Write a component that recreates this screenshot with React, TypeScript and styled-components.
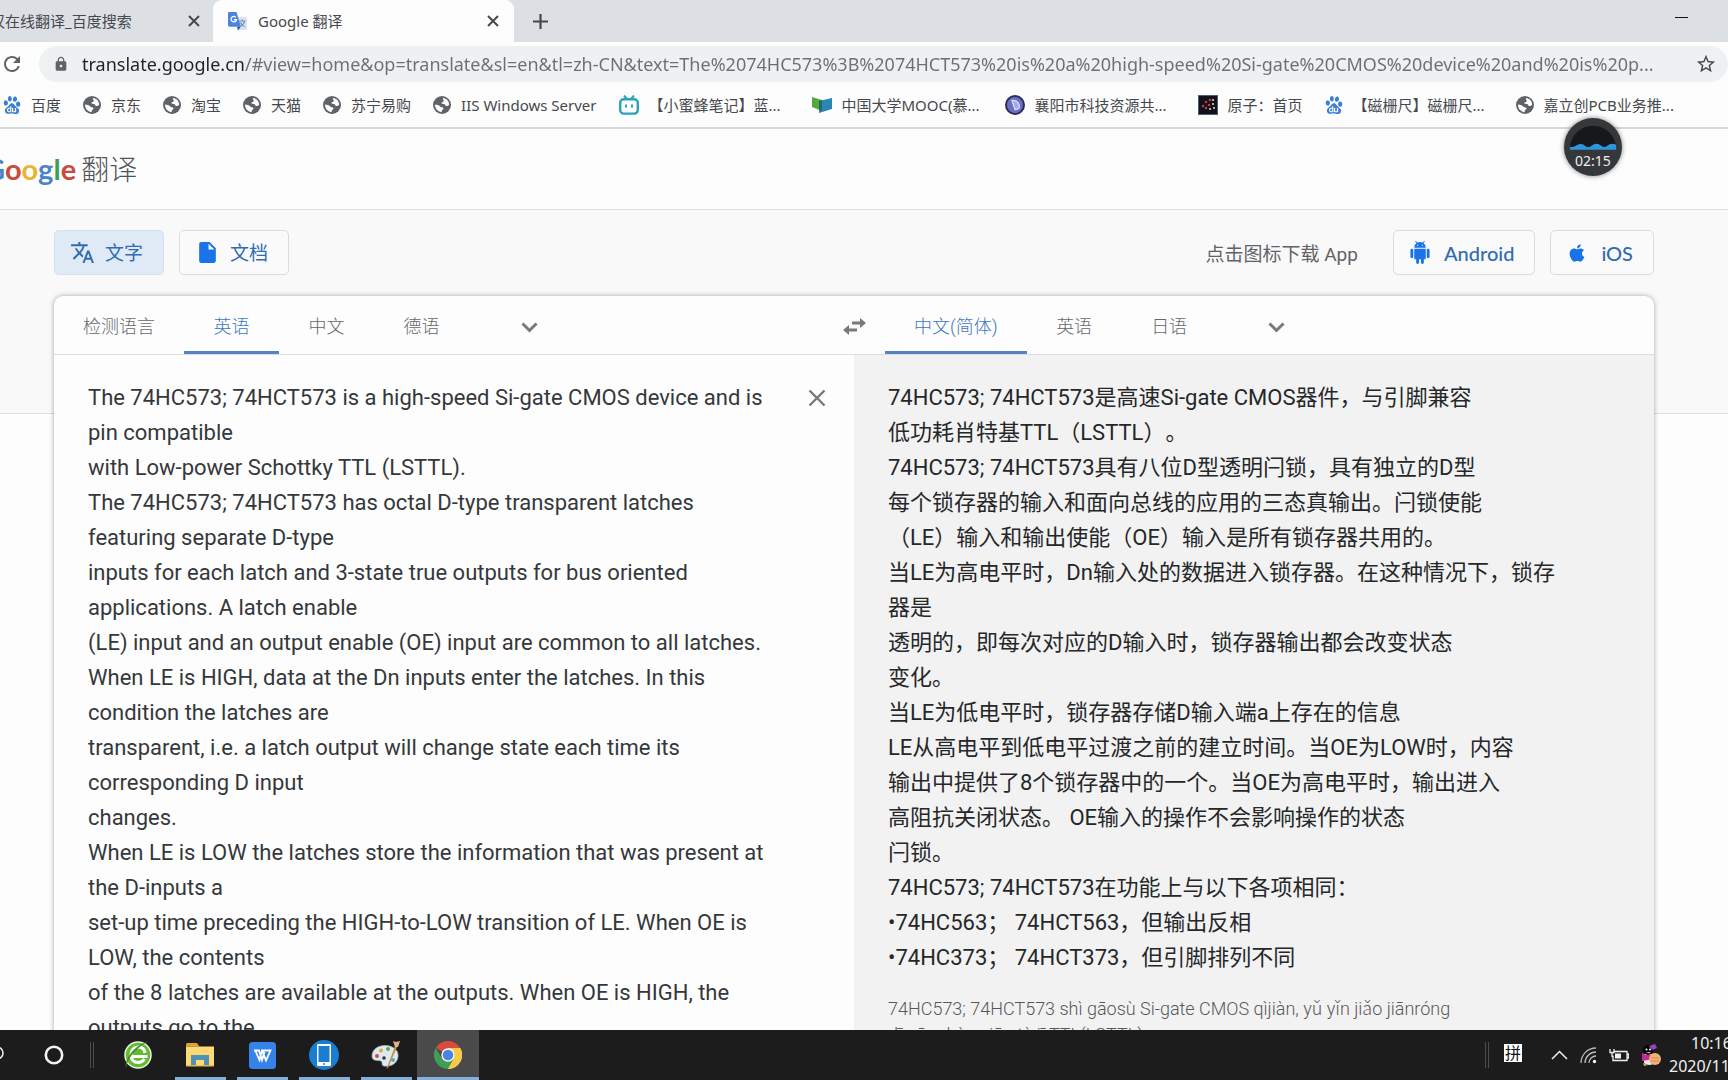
import React from "react";
import styled, { createGlobalStyle, css } from "styled-components";
import { MdTranslate, MdInsertDriveFile, MdLock, MdRefresh, MdStarBorder } from "react-icons/md";
import { FaApple } from "react-icons/fa";
import { SiBaidu } from "react-icons/si";

const ui = `"Noto Sans", "Noto Sans CJK SC", sans-serif`;
const web = `Roboto, "Noto Sans CJK SC", sans-serif`;
const brand = `Lato, "Noto Sans CJK SC", sans-serif`;

const Global = createGlobalStyle`
  *, *::before, *::after { box-sizing: border-box; }
  body { margin: 0; background: #fdfdfd; font-family: ${ui}; overflow: hidden; }
  button, input, textarea { font: inherit; color: inherit; border: 0; background: none; padding: 0; margin: 0; outline: 0; }
  a { color: inherit; text-decoration: none; }
  svg { display: block; flex: none; }
`;

const Desktop = styled.div`
  display: flex;
  flex-direction: column;
  height: 100vh;
  overflow: hidden;
`;

/* ---------- browser chrome ---------- */

const TabStrip = styled.div`
  display: flex;
  flex: none;
  height: 42px;
  background: #dce0e4;
  color: #45494d;
  font-size: 15px;
`;

const BackTab = styled.div`
  display: flex;
  align-items: center;
  justify-content: space-between;
  width: 213px;
  padding-right: 11px;
  overflow: hidden;
`;

const BackTitle = styled.span`
  margin: 0 0 2px -10px;
  white-space: nowrap;
`;

const FrontTab = styled.div`
  display: flex;
  align-items: center;
  gap: 11px;
  width: 301px;
  padding: 0 13px 0 15px;
  border-radius: 9px 9px 0 0;
  background: #fdfdfd;
`;

const FrontTitle = styled.span`
  flex: 1;
  padding-bottom: 2px;
  white-space: nowrap;
`;

const IconButton = styled.button<{ $w?: number }>`
  display: flex;
  align-items: center;
  justify-content: center;
  width: ${(p) => p.$w ?? 16}px;
  flex: none;
  color: #45494d;
`;

const Spacer = styled.div`
  flex: 1;
`;

const Minimize = styled(IconButton)`
  align-items: flex-start;
  padding-top: 17px;
  width: 94px;
  color: #111;
`;

const Toolbar = styled.div`
  display: flex;
  flex: none;
  align-items: center;
  height: 46px;
  padding-bottom: 2px;
  background: #fdfdfd;
`;

const ReloadButton = styled(IconButton)`
  width: 39px;
  padding-right: 16px;
  color: #5f6368;
`;

const Omnibox = styled.label`
  display: flex;
  flex: 1;
  align-items: center;
  height: 36px;
  padding: 0 10px 0 14px;
  border-radius: 18px;
  background: #eef1f2;
  color: #5f6368;
`;

const Address = styled.input`
  flex: 1;
  min-width: 0;
  height: 36px;
  margin-left: 13px;
  font-size: 18px;
  color: #6b6f73;
  background: linear-gradient(90deg, #202124 162px, #6b6f73 162px);
  background-clip: text;
  -webkit-background-clip: text;
  -webkit-text-fill-color: transparent;
`;

const Bookmarks = styled.nav`
  display: flex;
  flex: none;
  align-items: center;
  gap: 22px;
  height: 41px;
  padding: 0 0 5px 3px;
  border-bottom: 2px solid #d6d9dc;
  background: #fdfdfd;
  color: #45494d;
  font-size: 15px;
  white-space: nowrap;
`;

const Bookmark = styled.a<{ $long?: boolean }>`
  display: flex;
  align-items: center;
  flex: none;
  gap: 10px;
  line-height: 24px;
  span { ${(p) => p.$long && css`width: 141px;`} }
`;

/* ---------- web page ---------- */

const Page = styled.main`
  flex: 1;
  min-height: 0;
  overflow: hidden;
  font-family: ${web};
`;

const Masthead = styled.header`
  display: flex;
  align-items: center;
  height: 81px;
  padding-bottom: 2px;
  border-bottom: 1px solid #dcddde;
`;

const Logo = styled.a`
  display: flex;
  align-items: baseline;
  gap: 5px;
  margin-left: -16px;
  font-family: ${brand};
`;

const Wordmark = styled.span`
  font-size: 29px;
  font-weight: 700;
  line-height: 40px;
`;

const Letter = styled.span<{ $c: string }>`
  color: ${(p) => p.$c};
`;

const Product = styled.span`
  font-size: 28px;
  font-weight: 300;
  color: #505458;
`;

const Band = styled.div`
  height: 204px;
  padding: 20px 74px 0 54px;
  border-bottom: 1px solid #dcddde;
  background: #f9f9f9;
`;

const Modes = styled.div`
  display: flex;
  align-items: center;
  gap: 15px;
`;

const PillButton = styled.button<{ $active?: boolean }>`
  display: flex;
  align-items: center;
  gap: 10px;
  height: 45px;
  padding: 0 20px 0 15px;
  border: 1px solid ${(p) => (p.$active ? "#d3e1f3" : "#dadce0")};
  border-radius: 5px;
  background: ${(p) => (p.$active ? "#e0eaf6" : "#fafafa")};
  color: #2f6cb3;
  font-family: ${brand};
  font-size: 19px;
  line-height: 24px;
  white-space: nowrap;
`;

const StoreLink = styled(PillButton).attrs({ as: "a" })`
  gap: 14px;
  padding: 0 20px 0 16px;
  font-size: 20px;
  font-weight: 500;
`;

const StoreHint = styled.span`
  margin-right: 20px;
  font-size: 19px;
  color: #5f6368;
`;

const Card = styled.section`
  position: relative;
  margin: -118px 74px 0 54px;
  border-radius: 9px 9px 0 0;
  background: #fdfdfd;
  box-shadow: 0 0 5px rgba(0, 0, 0, 0.34);
`;

const LanguageRow = styled.div`
  display: grid;
  grid-template-columns: 1fr 62px 1fr;
  height: 59px;
  border-bottom: 1px solid #dcddde;
`;

const Languages = styled.div`
  display: flex;
`;

const Language = styled.button<{ $active?: boolean }>`
  min-width: 95px;
  padding: 7px 29px 0;
  border-bottom: 3px solid ${(p) => (p.$active ? "#5383c3" : "transparent")};
  color: ${(p) => (p.$active ? "#3f76bd" : "#66696c")};
  font-size: 18px;
  font-weight: 300;
  line-height: 24px;
  white-space: nowrap;
`;

const MoreButton = styled(IconButton)`
  width: 120px;
  padding-top: 5px;
  color: #77797c;
`;

const SwapButton = styled(IconButton)`
  width: 62px;
  padding-top: 3px;
  color: #77797c;
`;

const Panes = styled.div`
  display: grid;
  grid-template-columns: 1fr 1fr;
`;

const SourcePane = styled.div`
  display: flex;
  align-items: flex-start;
  padding: 25px 28px 0 34px;
`;

const SourceText = styled.textarea`
  flex: 1;
  min-width: 0;
  height: 700px;
  overflow: hidden;
  resize: none;
  white-space: pre;
  font-size: 22px;
  line-height: 35px;
  color: #35383b;
`;

const ClearButton = styled(IconButton)`
  height: 35px;
  width: 18px;
  color: #77797c;
`;

const TargetPane = styled.div`
  min-height: 725px;
  padding: 25px 34px 0;
  background: #f2f2f2;
`;

const TargetText = styled.p`
  margin: 0;
  white-space: pre;
  text-spacing-trim: space-all;
  font-size: 22px;
  line-height: 35px;
  color: #252729;
`;

const Pinyin = styled.p`
  margin: 21px 0 0;
  white-space: pre;
  font-size: 18px;
  font-weight: 300;
  line-height: 26px;
  color: #56595c;
`;

/* ---------- floating recorder ---------- */

const Recorder = styled.div`
  position: absolute;
  top: 118px;
  right: 106px;
  width: 58px;
  height: 58px;
  border-radius: 50%;
  background: #35383b;
  box-shadow: 0 0 5px rgba(0, 0, 0, 0.5);
  overflow: hidden;
  display: flex;
  flex-direction: column;
  align-items: center;
  color: #eee;
  font-size: 14px;
  line-height: 20px;
`;

/* ---------- taskbar ---------- */

const Taskbar = styled.footer`
  position: relative;
  display: flex;
  flex: none;
  align-items: stretch;
  height: 50px;
  background: #1c1c1c;
  color: #f0f0f0;
`;

const TaskSlot = styled.button<{ $open?: boolean; $active?: boolean }>`
  display: flex;
  align-items: center;
  justify-content: center;
  width: 62px;
  background: ${(p) => (p.$active ? "#4a4a4a" : "transparent")};
  background-image: ${(p) => (p.$open ? "linear-gradient(#82b0d8, #82b0d8)" : "none")};
  background-size: ${(p) => (p.$active ? "100%" : "51px")} 3px;
  background-position: center bottom;
  background-repeat: no-repeat;
`;

const SearchSlot = styled.button`
  width: 23px;
`;

const Grip = styled.div<{ $before?: number; $after?: number }>`
  align-self: center;
  width: 4px;
  height: 26px;
  margin: 0 ${(p) => p.$after ?? 0}px 0 ${(p) => p.$before ?? 0}px;
  border: solid #4c4c4c;
  border-width: 0 1px;
`;

const Tray = styled.div`
  display: flex;
  align-items: center;
  gap: 12px;
`;

const ImeButton = styled.button`
  width: 18px;
  height: 18px;
  margin: 0 17px 4px 0;
  background: #fff;
  color: #111;
  font-size: 16px;
  line-height: 18px;
`;

const Clock = styled.div`
  width: 59px;
  margin-left: -4px;
  overflow: hidden;
  white-space: nowrap;
  font-size: 16px;
  line-height: 23px;
`;

const Time = styled.div`
  padding-left: 22px;
`;

/* ---------- drawings ---------- */

const Cross = ({ size, stroke }: { size: number; stroke: number }) => (
  <svg width={size} height={size} viewBox="0 0 12 12" stroke="currentColor" strokeWidth={stroke} fill="none">
    <path d="M1 1l10 10M11 1L1 11" />
  </svg>
);

const Chevron = () => (
  <svg width="17" height="11" viewBox="0 0 17 11" fill="none" stroke="currentColor" strokeWidth="3">
    <path d="M1.500 1.500l7 7 7-7" />
  </svg>
);

const Globe = () => (
  <svg width="18" height="18" viewBox="0 0 18 18">
    <circle cx="9" cy="9" r="9" fill="#5f6368" />
    <path d="M10 2c3.500.3 6 3 6.200 6.500-.8 1.200-2 1.800-3.200 1.400-1-.4-.8-1.600-2-1.900-1-.3-2.500.2-2.600-1 0-1 1.600-.9 2.200-1.600.6-.8-.9-1.500-.6-3.400z" fill="#fdfdfd" />
    <path d="M2 8.500c1.800.2 3.800.6 5.200 1.900 1 .9 2.600.6 3.200 1.700.5 1-.8 1.500-1.300 2.200-.4.600-.2 1.200-.7 1.900C4.600 15.500 1.900 12.500 2 8.500z" fill="#fdfdfd" />
  </svg>
);

const Paw = () => <SiBaidu size={18} color="#3b7fd4" />;

const TranslateLogo = () => (
  <svg width="19" height="19" viewBox="0 0 20 20">
    <path d="M8 5h10.500a1.500 1.500 0 0 1 1.500 1.500v11a1.500 1.500 0 0 1-1.500 1.500H12z" fill="#dfe3e8" />
    <path d="M11.500 9.500h7M15 8v1.500M17.500 9.500c-.5 2.500-2.500 4.500-4.500 5.500M13 11c1 2 2.500 3.500 4.500 4.500" stroke="#6c8fc7" strokeWidth="1.200" fill="none" />
    <path d="M1.500 0H9l4.500 15.500H1.500A1.500 1.500 0 0 1 0 14V1.500A1.500 1.500 0 0 1 1.500 0z" fill="#4a84dc" />
    <path d="M9.500 15.500h4l-3 4z" fill="#2c5aa8" />
    <path d="M8.300 5.600A2.900 2.900 0 1 0 9 8H6.300" stroke="#fff" strokeWidth="1.400" fill="none" />
  </svg>
);

const Bee = () => (
  <svg width="20" height="20" viewBox="0 0 20 20" fill="none" stroke="#2aa3bd" strokeWidth="2">
    <path d="M5 0.500l3 3.500M15 0.500l-3 3.500" />
    <rect x="1.200" y="4.200" width="17.600" height="14.400" rx="3.500" strokeWidth="2.400" />
    <path d="M7 9.500v3M13 9.500v3" />
  </svg>
);

const Mooc = () => (
  <svg width="20" height="18" viewBox="0 0 20 18">
    <path d="M0 1l10 3v11L0 11z" fill="#55a83c" />
    <path d="M7 5l13-3v11L7 17z" fill="#2b86b8" />
    <path d="M7 5l3-1v11l-3-1z" fill="#1d6c62" />
  </svg>
);

const Disc = () => (
  <svg width="20" height="20" viewBox="0 0 20 20">
    <circle cx="10" cy="10" r="9" fill="#6a70c4" stroke="#2b2d55" strokeWidth="2" />
    <path d="M7 5.500l3 9c4 0 5-2 4-5s-3.500-4.500-7-4z" fill="#a3a8e6" stroke="#d9dbf8" strokeWidth="1.300" />
  </svg>
);

const Atom = () => (
  <svg width="20" height="20" viewBox="0 0 20 20">
    <rect x="0.500" y="0.500" width="19" height="19" fill="#10121c" stroke="#4d5b7c" />
    <g fill="#c23b32">
      <circle cx="5" cy="11" r="1.300" /><circle cx="8" cy="7" r="1.300" /><circle cx="8" cy="13" r="1.300" />
      <circle cx="12" cy="5" r="1.300" /><circle cx="11" cy="10" r="1.300" />
    </g>
    <g fill="#f1d9c8">
      <circle cx="15" cy="5" r="1" /><circle cx="15" cy="9" r="1" /><circle cx="12" cy="14" r="1" /><circle cx="16" cy="13" r="1" />
    </g>
  </svg>
);

const Android = () => (
  <svg width="20" height="23" viewBox="2 0 20 24" fill="#1a73e8">
    <path d="M6 18c0 .55.45 1 1 1h1v3.500c0 .83.67 1.500 1.500 1.500s1.500-.67 1.500-1.500V19h2v3.500c0 .83.67 1.500 1.500 1.500s1.500-.67 1.500-1.500V19h1c.55 0 1-.45 1-1V8H6v10zM3.500 8C2.670 8 2 8.670 2 9.500v7c0 .83.67 1.500 1.500 1.500S5 17.330 5 16.500v-7C5 8.670 4.330 8 3.500 8zm17 0c-.83 0-1.500.67-1.500 1.500v7c0 .83.67 1.500 1.500 1.500s1.500-.67 1.500-1.500v-7c0-.83-.67-1.500-1.500-1.500zm-4.970-5.840l1.300-1.300c.2-.2.2-.51 0-.71-.2-.2-.51-.2-.71 0l-1.480 1.480C13.850 1.230 12.950 1 12 1c-.96 0-1.860.23-2.660.63L7.850.15c-.2-.2-.51-.2-.71 0-.2.2-.2.51 0 .71l1.310 1.310C6.970 3.260 6 5.010 6 7h12c0-1.990-.97-3.750-2.470-4.840zM10 5H9V4h1v1zm5 0h-1V4h1v1z" />
  </svg>
);

const Swap = () => (
  <svg width="23" height="17" viewBox="0 0 23 17" fill="currentColor">
    <path d="M9 3.500h8V0l6 5-6 5V6.500H9zM14 10.500H6V7L0 12l6 5v-3.500h8z" />
  </svg>
);

const Wave = () => (
  <svg width="58" height="33" viewBox="0 0 59 33">
    <path d="M6 31a23.500 23.500 0 0 1 47 0z" fill="#15191c" />
    <path d="M6 29q4 1 7-1.500 5-3 9 1 3 2 6-.5 5-4 10 0 3 2.500 6 0 4-3.500 9-1v5H6z" fill="#2e95dc" />
  </svg>
);

const Cortana = () => (
  <svg width="20" height="20" viewBox="0 0 20 20" fill="none" stroke="#f2f2f2" strokeWidth="2.600">
    <circle cx="10" cy="10" r="8.200" />
  </svg>
);

const Lens = () => (
  <svg width="8" height="18" viewBox="0 0 8 18" fill="none" stroke="#f2f2f2" strokeWidth="1.500">
    <circle cx="-3" cy="7" r="6" />
  </svg>
);

const GreenBrowser = () => (
  <svg width="30" height="30" viewBox="0 0 30 30">
    <circle cx="15" cy="15" r="13" fill="#62bb33" stroke="#e8f5dd" strokeWidth="1.500" />
    <path d="M8.500 16.500h16M22 13c-.5-4-3.500-6-7-6-4 0-7 3.500-7 8s3 7.500 7 7.500c3 0 5-1.200 6.500-3.500" fill="none" stroke="#fff" strokeWidth="3.200" />
    <path d="M3 28C1 20 12 3 27 1.500c-3 .5-6 2-9 4.500C10 12 4 20 3 28z" fill="#3e8f22" />
  </svg>
);

const Folder = () => (
  <svg width="28" height="24" viewBox="0 0 28 24">
    <path d="M0 1.500Q0 0 1.500 0H11l2.500 3.500H0z" fill="#e3a12f" />
    <path d="M0 3.500h28V22H0z" fill="#fbd975" />
    <path d="M5 12h18v11h-5v-6h-8v6H5z" fill="#4d92b5" />
    <path d="M0 22h28v1.500H0z" fill="#e7b653" />
    <path d="M10 17h8v5h-8z" fill="#fbd975" />
  </svg>
);

const Writer = () => (
  <svg width="27" height="27" viewBox="0 0 27 27">
    <rect width="27" height="27" rx="3.500" fill="#3583e8" />
    <path d="M5 8.500h5l3 9.500 2.500-8M13 9l-2.500 9L6.500 9M12 8.500h9.500L17 18.500l-3.500-9" fill="none" stroke="#fff" strokeWidth="1.800" />
  </svg>
);

const Phone = () => (
  <svg width="30" height="30" viewBox="0 0 30 30">
    <circle cx="15" cy="15" r="15" fill="#1a7ed0" />
    <rect x="8" y="4" width="14" height="22" rx="1" fill="#fff" />
    <rect x="9.500" y="6" width="11" height="16" fill="#1a7ed0" />
    <circle cx="15" cy="24" r="1" fill="#1a7ed0" />
  </svg>
);

const Palette = () => (
  <svg width="30" height="30" viewBox="0 0 30 30">
    <path d="M1 16C1 9 8 5 15 5.500S28 10 27 17s-8 10-14 9c-3-.5-1-4-3-5s-9 1-9-5z" fill="#dce9f0" stroke="#9db4c2" strokeWidth="0.700" />
    <circle cx="6" cy="16" r="2" fill="#d94a3e" />
    <circle cx="10" cy="10.500" r="2" fill="#e9a63a" />
    <circle cx="17" cy="9" r="2" fill="#5aa84d" />
    <circle cx="13" cy="18" r="1.800" fill="#243a4c" />
    <circle cx="22" cy="20" r="2" fill="#57a6d6" />
    <path d="M24 6l2 1-9 21-1.500 1z" fill="#cf8a3e" />
    <path d="M22 1l3 1 4-1-2 6h-3z" fill="#e7b283" />
  </svg>
);

const Chrome = () => (
  <svg width="28" height="28" viewBox="0 0 48 48">
    <path d="M24 24L3.200 12A24 24 0 0 1 44.800 12z" fill="#d94b3c" />
    <path d="M24 24V12h20.800A24 24 0 0 1 24 48z" fill="#f7cb46" />
    <path d="M24 48A24 24 0 0 1 3.200 12L13.600 30 34.400 30z" fill="#3f9d58" />
    <path d="M34.400 30L24 48a24 24 0 0 0 20.800-36H24z" fill="#f7cb46" />
    <circle cx="24" cy="24" r="11.500" fill="#f4f4f4" />
    <circle cx="24" cy="24" r="9" fill="#4a84e0" />
  </svg>
);

const CaretUp = () => (
  <svg width="17" height="10" viewBox="0 0 17 10" fill="none" stroke="#f0f0f0" strokeWidth="1.500">
    <path d="M1 9l7.500-7.500L16 9" />
  </svg>
);

const Wifi = () => (
  <svg width="17" height="17" viewBox="0 0 17 17" fill="none" stroke="#b9b9b9" strokeWidth="1.300">
    <path d="M1 16A15 15 0 0 1 16 1M5 16A11 11 0 0 1 16 5M9 16a7 7 0 0 1 7-7" />
    <circle cx="14.500" cy="14.500" r="1.700" fill="#f5f5f5" stroke="none" />
  </svg>
);

const Battery = () => (
  <svg width="20" height="15" viewBox="0 0 20 15" fill="none" stroke="#f0f0f0" strokeWidth="1.300">
    <path d="M5 3.500h13v9H4v-5M18.500 6h1v4h-1M1 1v3.500h4V1M3 4.500V9" />
    <path d="M6 5.500h6v5H6z" fill="#f0f0f0" stroke="none" />
  </svg>
);

const Penguin = () => (
  <svg width="20" height="22" viewBox="0 0 20 22">
    <path d="M3 10h10l1 9q-6 4-11 0z" fill="#f3e6ea" />
    <circle cx="7" cy="6" r="5" fill="#060608" />
    <path d="M1 9q6 4 12 0l1 5-7 2-6 1z" fill="#c22a95" />
    <path d="M8 2l6-2 2 4-5 2z" fill="#9a3fc0" />
    <circle cx="5.500" cy="5.500" r="1" fill="#fff" />
    <circle cx="9" cy="5.500" r="1" fill="#fff" />
    <path d="M5 8h5l-2 1.500z" fill="#f2a33a" />
    <circle cx="14" cy="15" r="6" fill="#f0b07a" />
    <path d="M10 14h8M10 17h8" stroke="#d98a4e" />
    <path d="M2 19l5 2-4 1z" fill="#e8a23c" />
  </svg>
);

/* ---------- content ---------- */

const bookmarks: { label: string; icon: React.ReactNode; long?: boolean }[] = [
  { label: "百度", icon: <Paw /> },
  { label: "京东", icon: <Globe /> },
  { label: "淘宝", icon: <Globe /> },
  { label: "天猫", icon: <Globe /> },
  { label: "苏宁易购", icon: <Globe /> },
  { label: "IIS Windows Server", icon: <Globe /> },
  { label: "【小蜜蜂笔记】蓝...", icon: <Bee />, long: true },
  { label: "中国大学MOOC(慕...", icon: <Mooc />, long: true },
  { label: "襄阳市科技资源共...", icon: <Disc />, long: true },
  { label: "原子：首页", icon: <Atom /> },
  { label: "【磁栅尺】磁栅尺...", icon: <Paw />, long: true },
  { label: "嘉立创PCB业务推...", icon: <Globe />, long: true },
];

const address =
  "translate.google.cn/#view=home&op=translate&sl=en&tl=zh-CN&text=The%2074HC573%3B%2074HCT573%20is%20a%20high-speed%20Si-gate%20CMOS%20device%20and%20is%20p...";

const source = `The 74HC573; 74HCT573 is a high-speed Si-gate CMOS device and is
pin compatible
with Low-power Schottky TTL (LSTTL).
The 74HC573; 74HCT573 has octal D-type transparent latches
featuring separate D-type
inputs for each latch and 3-state true outputs for bus oriented
applications. A latch enable
(LE) input and an output enable (OE) input are common to all latches.
When LE is HIGH, data at the Dn inputs enter the latches. In this
condition the latches are
transparent, i.e. a latch output will change state each time its
corresponding D input
changes.
When LE is LOW the latches store the information that was present at
the D-inputs a
set-up time preceding the HIGH-to-LOW transition of LE. When OE is
LOW, the contents
of the 8 latches are available at the outputs. When OE is HIGH, the
outputs go to the`;

const target = `74HC573; 74HCT573是高速Si-gate CMOS器件，与引脚兼容
低功耗肖特基TTL（LSTTL）。
74HC573; 74HCT573具有八位D型透明闩锁，具有独立的D型
每个锁存器的输入和面向总线的应用的三态真输出。闩锁使能
（LE）输入和输出使能（OE）输入是所有锁存器共用的。
当LE为高电平时，Dn输入处的数据进入锁存器。在这种情况下，锁存
器是
透明的，即每次对应的D输入时，锁存器输出都会改变状态
变化。
当LE为低电平时，锁存器存储D输入端a上存在的信息
LE从高电平到低电平过渡之前的建立时间。当OE为LOW时，内容
输出中提供了8个锁存器中的一个。当OE为高电平时，输出进入
高阻抗关闭状态。 OE输入的操作不会影响操作的状态
闩锁。
74HC573; 74HCT573在功能上与以下各项相同：
•74HC563； 74HCT563，但输出反相
•74HC373； 74HCT373，但引脚排列不同`;

const pinyin = `74HC573; 74HCT573 shì gāosù Si-gate CMOS qìjiàn, yǔ yǐn jiǎo jiānróng
dī gōnghào xiāo tè jī TTL(LSTTL).`;

const wordmark: [string, string][] = [
  ["G", "#4a84c8"],
  ["o", "#c94b40"],
  ["o", "#e8b62c"],
  ["g", "#4a84c8"],
  ["l", "#3f9d58"],
  ["e", "#c94b40"],
];

export default function App() {
  return (
    <Desktop>
      <Global />
      <TabStrip>
        <BackTab>
          <BackTitle>汉在线翻译_百度搜索</BackTitle>
          <IconButton aria-label="关闭标签页"><Cross size={12} stroke={2} /></IconButton>
        </BackTab>
        <FrontTab>
          <TranslateLogo />
          <FrontTitle>Google 翻译</FrontTitle>
          <IconButton aria-label="关闭标签页"><Cross size={12} stroke={2} /></IconButton>
        </FrontTab>
        <IconButton $w={52} aria-label="新标签页">
          <svg width="15" height="15" viewBox="0 0 15 15" stroke="currentColor" strokeWidth="2.200"><path d="M7.500 0v15M0 7.500h15" /></svg>
        </IconButton>
        <Spacer />
        <Minimize aria-label="最小化">
          <svg width="13" height="2" viewBox="0 0 13 2"><path d="M0 0h13v1H0z" fill="currentColor" /></svg>
        </Minimize>
      </TabStrip>
      <Toolbar>
        <ReloadButton aria-label="重新加载"><MdRefresh size={24} /></ReloadButton>
        <Omnibox>
          <MdLock size={16} />
          <Address aria-label="地址" defaultValue={address} />
          <IconButton $w={24} aria-label="收藏"><MdStarBorder size={22} /></IconButton>
        </Omnibox>
      </Toolbar>
      <Bookmarks>
        {bookmarks.map((b) => (
          <Bookmark key={b.label} href="#" $long={b.long}>
            {b.icon}
            <span>{b.label}</span>
          </Bookmark>
        ))}
      </Bookmarks>
      <Page>
        <Masthead>
          <Logo href="#">
            <Wordmark>
              {wordmark.map(([ch, c], i) => (
                <Letter key={i} $c={c}>{ch}</Letter>
              ))}
            </Wordmark>
            <Product>翻译</Product>
          </Logo>
        </Masthead>
        <Band>
          <Modes>
            <PillButton $active><MdTranslate size={25} /><span>文字</span></PillButton>
            <PillButton><MdInsertDriveFile size={25} color="#1a73e8" /><span>文档</span></PillButton>
            <Spacer />
            <StoreHint>点击图标下载 App</StoreHint>
            <StoreLink href="#"><Android /><span>Android</span></StoreLink>
            <StoreLink href="#"><FaApple size={20} color="#1a73e8" /><span>iOS</span></StoreLink>
          </Modes>
        </Band>
        <Card>
          <LanguageRow>
            <Languages>
              <Language>检测语言</Language>
              <Language $active>英语</Language>
              <Language>中文</Language>
              <Language>德语</Language>
              <MoreButton aria-label="更多源语言"><Chevron /></MoreButton>
            </Languages>
            <SwapButton aria-label="交换语言"><Swap /></SwapButton>
            <Languages>
              <Language $active>中文(简体)</Language>
              <Language>英语</Language>
              <Language>日语</Language>
              <MoreButton aria-label="更多目标语言"><Chevron /></MoreButton>
            </Languages>
          </LanguageRow>
          <Panes>
            <SourcePane>
              <SourceText aria-label="原文" defaultValue={source} spellCheck={false} />
              <ClearButton aria-label="清除原文"><Cross size={18} stroke={1.6} /></ClearButton>
            </SourcePane>
            <TargetPane>
              <TargetText>{target}</TargetText>
              <Pinyin>{pinyin}</Pinyin>
            </TargetPane>
          </Panes>
        </Card>
      </Page>
      <Taskbar>
        <SearchSlot aria-label="搜索"><Lens /></SearchSlot>
        <TaskSlot aria-label="Cortana"><Cortana /></TaskSlot>
        <Grip $before={5} $after={13} />
        <TaskSlot aria-label="浏览器"><GreenBrowser /></TaskSlot>
        <TaskSlot $open aria-label="文件资源管理器"><Folder /></TaskSlot>
        <TaskSlot $open aria-label="WPS"><Writer /></TaskSlot>
        <TaskSlot $open aria-label="手机助手"><Phone /></TaskSlot>
        <TaskSlot $open aria-label="画图"><Palette /></TaskSlot>
        <TaskSlot $open $active aria-label="Chrome"><Chrome /></TaskSlot>
        <Spacer />
        <Grip $after={15} />
        <Tray>
          <ImeButton>拼</ImeButton>
          <CaretUp />
          <Wifi />
          <Battery />
          <Penguin />
          <Clock>
            <Time>10:16</Time>
            <div>2020/11</div>
          </Clock>
        </Tray>
      </Taskbar>
      <Recorder>
        <Wave />
        <span>02:15</span>
      </Recorder>
    </Desktop>
  );
}
